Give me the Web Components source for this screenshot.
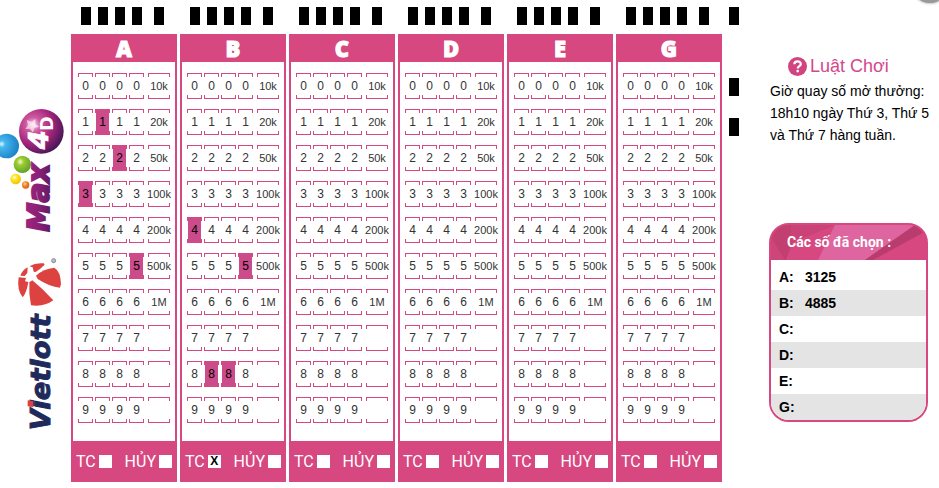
<!DOCTYPE html>
<html lang="vi">
<head>
<meta charset="utf-8">
<title>Max 4D</title>
<style>
  :root {
    --pink: #d6487f;
    --picked: #cb4b8b;
    --stripe: #e4e4e4;
  }

  body {
    margin: 0;
    background: #fff;
    color: #000;
    font-family: "Liberation Sans", Arial, sans-serif;
  }
</style>
</head>
<body>
<max-page>
  <brand-logos slot="brand"></brand-logos>
  <bet-board label="A" picks="3125"></bet-board>
  <bet-board label="B" picks="4885" tc></bet-board>
  <bet-board label="C"></bet-board>
  <bet-board label="D"></bet-board>
  <bet-board label="E"></bet-board>
  <bet-board label="G"></bet-board>
  <game-rules slot="side" heading="Luật Chơi">Giờ quay số mở thưởng: 18h10 ngày Thứ 3, Thứ 5 và Thứ 7 hàng tuần.</game-rules>
  <picked-numbers slot="side" heading="Các số đã chọn :"></picked-numbers>
</max-page>

<script>
class MaxPage extends HTMLElement {
  constructor() {
    super();

    const shadow = this.attachShadow({ mode: 'open' });

    shadow.innerHTML = `
      <style>
        :host {
          display: grid;
          grid-template-columns: 71px minmax(0, 1fr) 10px 193px;
          column-gap: 7px;
          position: relative;
          overflow: hidden;
        }

        .brand {
          padding-top: 100px;
          margin-right: -7px;
        }

        .boards {
          display: grid;
          grid-template-columns: repeat(6, minmax(0, 1fr));
          column-gap: 3px;
          padding: 7px 0 6px;
          margin-left: -7px;
        }

        .marks {
          display: flex;
          flex-direction: column;
          gap: 22px;
          padding-top: 7px;
        }

        .marks i {
          height: 18px;
          background: #000;
        }

        .marks i:first-child {
          margin-bottom: 31px;
        }

        .side {
          display: flex;
          flex-direction: column;
          gap: 77px;
          padding: 54px 0 0 23px;
        }

        /* round close button, cut off by the top of the page */
        .close {
          position: absolute;
          top: -33px;
          right: -9px;
          width: 36px;
          height: 36px;
          border: 0;
          border-radius: 50%;
          background: #999;
          box-shadow: 0 0 3px #888;
        }
      </style>

      <div class="brand"><slot name="brand"></slot></div>
      <main class="boards"><slot></slot></main>
      <div class="marks"><i></i><i></i><i></i></div>
      <aside class="side"><slot name="side"></slot></aside>
      <button class="close" type="button" aria-label="Đóng"></button>
    `;
  }
}

class BrandLogos extends HTMLElement {
  constructor() {
    super();

    const shadow = this.attachShadow({ mode: 'open' });

    shadow.innerHTML = `
      <style>
        :host {
          display: block;
        }

        svg {
          display: block;
          width: 70px;
        }

        text {
          font-family: "DejaVu Sans", sans-serif;
          font-weight: bold;
          font-style: italic;
        }
      </style>

      <svg viewBox="0 0 210 420" role="img" aria-label="Max 4D">
        <defs>
          <radialGradient id="ball" cx="32%" cy="35%" r="75%">
            <stop offset="0" stop-color="#f7d9ec"/>
            <stop offset=".22" stop-color="#cf5aa0"/>
            <stop offset=".55" stop-color="#a8267f"/>
            <stop offset="1" stop-color="#3d1552"/>
          </radialGradient>
          <radialGradient id="blue" cx="30%" cy="42%" r="70%">
            <stop offset="0" stop-color="#e8f8ff"/>
            <stop offset=".2" stop-color="#45b8ee"/>
            <stop offset="1" stop-color="#1a80c8"/>
          </radialGradient>
          <radialGradient id="green" cx="38%" cy="35%" r="70%">
            <stop offset="0" stop-color="#f2fbd0"/>
            <stop offset=".3" stop-color="#9ccb33"/>
            <stop offset="1" stop-color="#5aa024"/>
          </radialGradient>
          <radialGradient id="yellow" cx="38%" cy="35%" r="70%">
            <stop offset="0" stop-color="#fffde0"/>
            <stop offset=".35" stop-color="#ffe52a"/>
            <stop offset="1" stop-color="#f0c000"/>
          </radialGradient>
          <radialGradient id="orange" cx="38%" cy="35%" r="70%">
            <stop offset="0" stop-color="#ffd9a8"/>
            <stop offset=".4" stop-color="#ef8a2d"/>
            <stop offset="1" stop-color="#d3591c"/>
          </radialGradient>
          <linearGradient id="word" x1="0" y1="0" x2="0" y2="1">
            <stop offset="0" stop-color="#a32581"/>
            <stop offset=".5" stop-color="#8a2077"/>
            <stop offset="1" stop-color="#4f185c"/>
          </linearGradient>
        </defs>
        <circle cx="124" cy="94" r="67" fill="url(#ball)"/>
        <path d="M80 60l15 5 12-8-1 15 12 8-15 4-4 14-9-12-14 1 8-12z" fill="#fff" opacity=".6"/>
        <circle cx="20" cy="138" r="37" fill="url(#blue)"/>
        <circle cx="67" cy="193" r="26" fill="url(#green)"/>
        <circle cx="47" cy="237" r="16" fill="url(#yellow)"/>
        <circle cx="77" cy="255" r="11" fill="url(#orange)"/>
        <text transform="translate(146 395) rotate(-90)" font-size="88" fill="url(#word)" stroke="url(#word)" stroke-width="6">Max</text>
        <text transform="translate(143 148) rotate(-90)" font-size="82" fill="#fff" stroke="#fff" stroke-width="2">4</text>
        <text transform="translate(160 92) rotate(-90)" font-size="52" fill="#fff" style="font-style: normal">D</text>
      </svg>

      <svg viewBox="0 0 210 600" role="img" aria-label="Vietlott">
        <g fill="#dc4340">
          <path d="M88 79Q108 67 131 70L134 74Q121 87 107 96L101 95 98 82z"/>
          <path d="M83 82Q67 90 61 107L74 108 82 99z"/>
          <path d="M56 112Q50 150 68 172Q80 158 85 126L75 124 78 114z"/>
          <path d="M88 127L97 121Q128 146 160 181Q131 202 93 196Q86 160 88 127z"/>
          <path d="M108 107Q130 86 163 83Q182 94 183 132L180 143Q148 140 113 117z"/>
        </g>
        <circle cx="161" cy="62" r="6" fill="#b9c0cc" stroke="#7e8899" stroke-width="3"/>
        <text transform="translate(149 571) rotate(-90)" font-size="82" fill="#1f2a5c" stroke="#1f2a5c" stroke-width="3">Vietlott</text>
        <path d="M83 481l17 3v18l-17-3z" fill="#e0403c"/>
      </svg>
    `;
  }
}

class BetBoard extends HTMLElement {
  static get observedAttributes() {
    return ['label', 'picks', 'tc'];
  }

  constructor() {
    super();

    const shadow = this.attachShadow({ mode: 'open' });

    shadow.innerHTML = `
      <style>
        :host {
          display: flex;
          flex-direction: column;
          gap: 9px;
        }

        .marks,
        .row {
          display: grid;
          grid-template-columns: repeat(4, minmax(0, 15fr)) minmax(0, 24fr);
          column-gap: 2px;
        }

        .marks {
          padding: 0 7px;
        }

        .marks i {
          justify-self: center;
          width: 10px;
          height: 18px;
          background: #000;
        }

        .marks i:last-child,
        .price {
          margin-left: 2px;
        }

        .board {
          border: solid var(--pink);
          border-width: 0 2px;
        }

        h2 {
          margin: 0;
          background: var(--pink);
          color: #fff;
          font: 800 22px/28px "Open Sans", sans-serif;
          text-align: center;
          -webkit-text-stroke: 1px #fff;
        }

        .rows {
          display: grid;
          row-gap: 10px;
          padding: 11px 5px 18px;
        }

        button {
          display: flex;
          flex-direction: column;
          align-items: center;
          height: 26px;
          padding: 0;
          border: 0;
          background: none;
          color: #333;
          font: 12px/18px "Liberation Sans", Arial, sans-serif;
          white-space: nowrap;
        }

        .price {
          font-size: 11px;
        }

        /* the brackets above and below the label */
        button::before,
        button::after {
          content: "";
          box-sizing: border-box;
          align-self: stretch;
          height: 4px;
          border: 1px solid var(--pink);
        }

        button::before {
          border-bottom: 0;
        }

        button::after {
          border-top: 0;
          margin-top: auto;
        }

        button[aria-pressed="true"] {
          background: linear-gradient(var(--picked), var(--picked)) center / calc(100% - 2px) 100% no-repeat;
          color: #000;
        }

        .foot {
          display: flex;
          justify-content: space-between;
          align-items: center;
          height: 41px;
          padding: 0 3px;
          background: var(--pink);
          color: #fff;
          font: 16px/20px Roboto, sans-serif;
        }

        label {
          display: flex;
          align-items: center;
          gap: 3px;
        }

        input {
          appearance: none;
          display: grid;
          place-items: center;
          width: 13px;
          height: 13px;
          margin: 0;
          background: #fff;
        }

        input:checked::before {
          content: "X";
          color: #000;
          font: bold 12px/13px "Liberation Sans", sans-serif;
        }
      </style>

      <div class="marks"><i></i><i></i><i></i><i></i><i></i></div>
      <section class="board">
        <h2></h2>
        <div class="rows"></div>
        <div class="foot">
          <label>TC<input type="checkbox" id="tc"></label>
          <label>HỦY<input type="checkbox" id="cancel"></label>
        </div>
      </section>
    `;

    this._title = shadow.querySelector('h2');
    this._rows = shadow.querySelector('.rows');
    this._tc = shadow.getElementById('tc');
    this._prices = ['10k', '20k', '50k', '100k', '200k', '500k', '1M'];
  }

  connectedCallback() {
    this._render();
  }

  attributeChangedCallback() {
    this._render();
  }

  _render() {
    const picks = this.getAttribute('picks') || '';

    this._title.textContent = this.getAttribute('label') || '';
    this._tc.checked = this.hasAttribute('tc');

    this._rows.innerHTML = this._prices
      .concat('', '', '')
      .map((price, digit) => {
        const cells = [0, 1, 2, 3]
          .map(i => `<button type="button" aria-pressed="${picks[i] === String(digit)}">${digit}</button>`)
          .join('');
        return `<div class="row">${cells}<button type="button" class="price">${price}</button></div>`;
      })
      .join('');
  }
}

class GameRules extends HTMLElement {
  constructor() {
    super();

    const shadow = this.attachShadow({ mode: 'open' });

    shadow.innerHTML = `
      <style>
        :host {
          display: block;
        }

        h2 {
          display: flex;
          align-items: center;
          gap: 3px;
          margin: 0 0 2px;
          padding-left: 19px;
          color: #d4478d;
          font-size: 18px;
          font-weight: normal;
          line-height: 24px;
        }

        svg {
          width: 19px;
          height: 19px;
        }

        p {
          margin: 0 -8px 0 1px;
          padding-right: 12px;
          font-size: 14px;
          line-height: 22px;
        }
      </style>

      <h2>
        <svg viewBox="0 0 19 19" aria-hidden="true">
          <circle cx="9.5" cy="9.5" r="9.5" fill="#d0447f"/>
          <path d="M6.3 7.2C6.4 3.4 12.9 3.5 12.8 7.1C12.7 9.2 9.8 9 9.7 11.5" fill="none" stroke="#fff" stroke-width="2.2"/>
          <circle cx="9.7" cy="14.1" r="1.3" fill="#fff"/>
        </svg>
        <span></span>
      </h2>
      <p><slot></slot></p>
    `;
  }

  connectedCallback() {
    this.shadowRoot.querySelector('span').textContent = this.getAttribute('heading');
  }
}

class PickedNumbers extends HTMLElement {
  constructor() {
    super();

    const shadow = this.attachShadow({ mode: 'open' });

    shadow.innerHTML = `
      <style>
        :host {
          display: block;
          margin-right: 11px;
        }

        .card {
          border: 2px solid var(--pink);
          border-radius: 20px;
          background: var(--pink);
          overflow: hidden;
        }

        header {
          display: grid;
          height: 35px;
        }

        header > * {
          grid-area: 1 / 1;
        }

        svg {
          width: 100%;
          height: 35px;
        }

        h2 {
          margin: 0;
          padding-left: 16px;
          color: #fff;
          font: bold 14px/35px Roboto, sans-serif;
          z-index: 1;
        }

        .list {
          padding-top: 4px;
          background: #fff;
        }

        table {
          width: 100%;
          border-collapse: collapse;
          font-size: 14px;
          font-weight: bold;
          line-height: 26px;
        }

        tr:nth-child(even) {
          background: var(--stripe);
        }

        th,
        td {
          height: 26px;
          padding: 0;
          text-align: left;
        }

        th {
          width: 26px;
          padding-left: 8px;
        }
      </style>

      <section class="card">
        <header>
          <svg viewBox="0 0 155 35" preserveAspectRatio="none" aria-hidden="true">
            <path d="M0 0H28L15 35H0z" fill="#c2406f"/>
            <path d="M0 12L14 35H0z" fill="#cd4579"/>
            <path d="M64 0H144L94 35H47z" fill="#de659f"/>
            <path d="M20 0H64L20 18z" fill="#c94379"/>
            <path d="M144 0H155V6L102 35H94z" fill="#b83c6d"/>
          </svg>
          <h2></h2>
        </header>
        <div class="list"><table><tbody></tbody></table></div>
      </section>
    `;
  }

  connectedCallback() {
    const boards = [...document.querySelectorAll('bet-board')];

    this.shadowRoot.querySelector('h2').textContent = this.getAttribute('heading');
    this.shadowRoot.querySelector('tbody').innerHTML = boards
      .map(board => `<tr><th scope="row">${board.getAttribute('label')}:</th><td>${board.getAttribute('picks') || ''}</td></tr>`)
      .join('');
  }
}

customElements.define('max-page', MaxPage);
customElements.define('brand-logos', BrandLogos);
customElements.define('bet-board', BetBoard);
customElements.define('game-rules', GameRules);
customElements.define('picked-numbers', PickedNumbers);
</script>
</body>
</html>
